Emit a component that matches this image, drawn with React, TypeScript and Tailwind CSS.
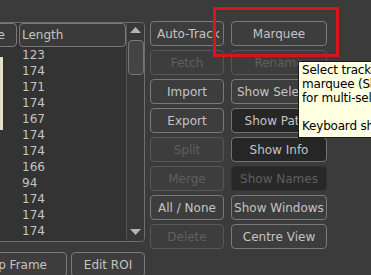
import React from "react";

type Kind = "normal" | "disabled" | "checked" | "checkedDisabled";

const kindStyles: Record<Kind, string> = {
  normal: "border-[#7a7a7a] bg-[#3d3d3d] text-[#c4c4c4]",
  disabled: "border-[#575757] bg-[#3d3d3d] text-[#5f5f5f]",
  checked: "border-[#727272] bg-[#262626] text-[#c4c4c4]",
  checkedDisabled: "border-[#303030] bg-[#282828] text-[#5f5f5f]",
};

function ToolButton({
  label,
  kind = "normal",
  className = "justify-center-safe px-[6px]",
}: {
  label: string;
  kind?: Kind;
  className?: string;
}) {
  return (
    <button
      className={`flex h-[25px] shrink-0 items-center overflow-hidden whitespace-nowrap rounded-[4px] border ${kindStyles[kind]} ${className}`}
    >
      {label}
    </button>
  );
}

const lengths = ["123", "174", "171", "174", "167", "174", "174", "166", "94", "174", "174", "174"];

function TrackTable() {
  return (
    <div className="flex h-[220px] overflow-hidden rounded-[4px] border border-[#6e6e6e] bg-[#333333]">
      <div className="flex w-[185px] flex-col">
        <div className="flex h-[24px] gap-[2px]">
          <div className="flex w-[76px] items-center justify-end rounded-[4px] border border-[#7a7a7a] bg-[#3a3a3a] pr-[11px] text-[#c4c4c4]">
            Name
          </div>
          <div className="flex w-[107px] items-center rounded-[4px] border border-[#7a7a7a] bg-[#3a3a3a] pl-[2px] text-[#c4c4c4]">
            Length
          </div>
        </div>
        {lengths.map((len, i) => (
          <div key={i} className="flex h-[16px] items-center">
            <div className="w-[81px]" />
            <div className="text-[#c4c4c4]">{len}</div>
          </div>
        ))}
      </div>
      <div className="flex w-[18px] flex-col items-center rounded-bl-[4px] border-l border-[#555555] bg-[#383838]">
        <svg width="11" height="6" viewBox="0 0 11 6" className="mt-[4px]">
          <polygon points="0,6 11,6 5.5,0" fill="#b4b4b4" />
        </svg>
        <div className="mt-[7px] h-[35px] w-[16px] rounded-[4px] border border-[#767676] bg-[#444444]" />
        <div className="flex-1" />
        <svg width="11" height="6" viewBox="0 0 11 6" className="mb-[6px]">
          <polygon points="0,0 11,0 5.5,6" fill="#b4b4b4" />
        </svg>
      </div>
    </div>
  );
}

export default function App() {
  return (
    <div className="relative h-[275px] w-[371px] overflow-hidden bg-[#3b3b3b] font-['DejaVu_Sans',sans-serif] text-[12px]">
      <div className="flex">
        <div className="ml-[-60px] flex w-[205px] shrink-0 flex-col pt-[22px]">
          <TrackTable />
          <div className="mt-[10px] flex gap-[4px] pl-[24px]">
            <ToolButton label="Jump Frame" className="w-[103px] justify-end pr-[19px]" />
            <ToolButton label="Edit ROI" className="w-[74px] justify-center px-[4px]" />
          </div>
        </div>

        <div className="ml-[5px] flex w-[74px] shrink-0 flex-col gap-[4px] pt-[21px]">
          <ToolButton label="Auto-Track" />
          <ToolButton label="Fetch" kind="disabled" />
          <ToolButton label="Import" />
          <ToolButton label="Export" />
          <ToolButton label="Split" kind="disabled" />
          <ToolButton label="Merge" kind="disabled" />
          <ToolButton label="All / None" />
          <ToolButton label="Delete" kind="disabled" />
        </div>

        <div className="ml-[7px] flex w-[96px] shrink-0 flex-col gap-[4px] pt-[21px]">
          <ToolButton label="Marquee" />
          <ToolButton label="Rename" kind="disabled" />
          <ToolButton label="Show Selection" className="justify-center-safe px-[5px]" />
          <ToolButton label="Show Paths" kind="checked" />
          <ToolButton label="Show Info" kind="checked" />
          <ToolButton label="Show Names" kind="checkedDisabled" />
          <ToolButton label="Show Windows" className="justify-center-safe px-[2px]" />
          <ToolButton label="Centre View" />
        </div>
      </div>

      {/* sliver of the viewer window behind the table */}
      <div className="absolute left-0 top-[57px] h-[73px] w-[3px] bg-[#e4e0cc]" />

      {/* highlight box */}
      <div className="pointer-events-none absolute left-[213px] top-[7px] h-[50px] w-[126px] border-[3px] border-[#d8151b]" />

      {/* tooltip */}
      <div className="absolute left-[298px] top-[61px] w-[140px] border border-[#1a1a1a] bg-[#ffffe1] pb-[4px] pl-[3px] pt-[1px] leading-[14px] tracking-[-0.2px] whitespace-pre text-black">
        <div>Select tracked points with a</div>
        <div>marquee (Shift+drag)</div>
        <div>for multi-selection.</div>
        <div> </div>
        <div>Keyboard shortcut: M</div>
      </div>
    </div>
  );
}
